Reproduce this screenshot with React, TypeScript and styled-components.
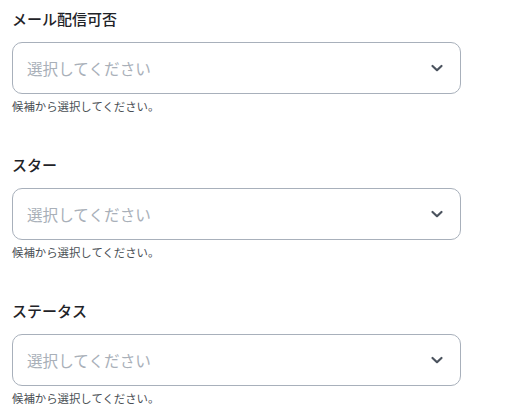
import React from 'react';
import styled, {createGlobalStyle} from 'styled-components';

const GlobalStyle = createGlobalStyle`
    html, body {
        margin: 0;
        padding: 0;
        background: #ffffff;
    }
    body {
        font-family: "Noto Sans CJK JP", "Noto Sans", sans-serif;
    }
`;

const Form = styled.div`
    display: flex;
    flex-direction: column;
    gap: 39.75px;
    padding: 8px 46px 0 12px;
    width: 449px;
`;

const Field = styled.div`
    display: flex;
    flex-direction: column;
`;

const Label = styled.div`
    font-size: 15px;
    font-weight: 500;
    color: #1f2328;
    line-height: 22px;
    margin-bottom: 12px;
`;

const SelectBox = styled.div`
    border: 1px solid #a8b0bb;
    border-radius: 10px;
    box-sizing: border-box;
    height: 52px;
    display: flex;
    align-items: center;
    justify-content: space-between;
    padding: 0 16px 0 14px;
`;

const Placeholder = styled.span`
    font-size: 15.6px;
    color: #a9b0b9;
`;

const Help = styled.div`
    font-size: 11.4px;
    color: #4a4f55;
    line-height: 16px;
    margin-top: 4px;
`;

function Chevron() {
    return (
        <svg width="14" height="14" viewBox="0 0 14 14">
            <path d="M2.5 5 L7 9.2 L11.5 5" fill="none" stroke="#4b535e" strokeWidth="2.2" strokeLinecap="round" strokeLinejoin="round" />
        </svg>
    );
}

const fields = ['メール配信可否', 'スター', 'ステータス'];

export default function App() {
    return (
        <>
            <GlobalStyle />
            <Form>
                {fields.map((name) => (
                    <Field key={name}>
                        <Label>{name}</Label>
                        <SelectBox>
                            <Placeholder>選択してください</Placeholder>
                            <Chevron />
                        </SelectBox>
                        <Help>候補から選択してください。</Help>
                    </Field>
                ))}
            </Form>
        </>
    );
}
